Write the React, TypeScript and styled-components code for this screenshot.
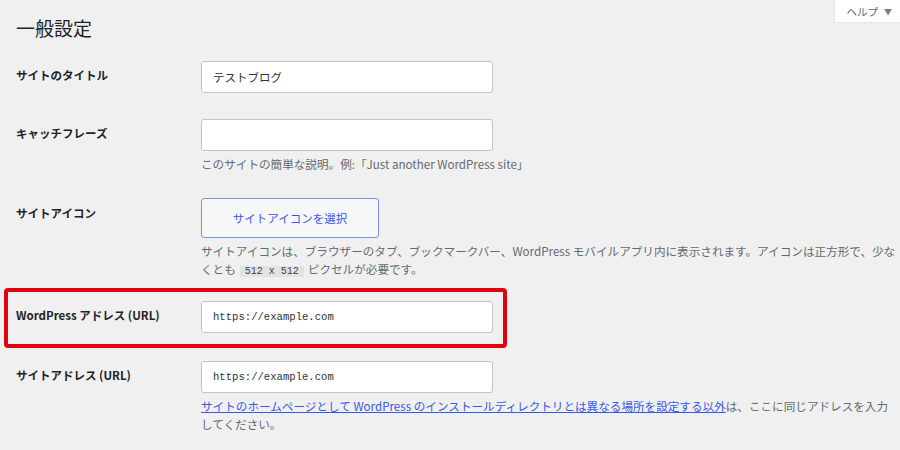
import * as React from 'react';
import styled, { createGlobalStyle } from 'styled-components';

const GlobalStyle = createGlobalStyle`
  html, body {
    margin: 0;
    padding: 0;
    background: #f0f0f1;
  }
  body {
    font-family: "Noto Sans CJK JP", "Liberation Sans", sans-serif;
    color: #1d2327;
  }
`;

const Page = styled.div`
  width: 900px;
  height: 450px;
  overflow: hidden;
  padding-left: 16px;
  box-sizing: border-box;
`;

const Header = styled.div`
  display: flex;
  justify-content: space-between;
  align-items: flex-start;
  height: 48px;
`;

const Title = styled.h1`
  margin: 0;
  padding-top: 15px;
  font-size: 19px;
  line-height: 26px;
  font-weight: 400;
  color: #1d2327;
`;

const HelpTab = styled.button`
  display: flex;
  align-items: center;
  gap: 6px;
  height: 22px;
  padding: 0 8px 0 12px;
  border: none;
  background: #fff;
  box-shadow: 0 0 0 1px rgba(0, 0, 0, 0.04);
  font-family: inherit;
  font-size: 10.5px;
  color: #646970;
  cursor: pointer;
  span {
    font-size: 8px;
    color: #787c82;
  }
`;

const FormTable = styled.div`
  display: flex;
  flex-direction: column;
`;

const Row = styled.div<{ $flat?: boolean }>`
  display: flex;
  align-items: flex-start;
  padding: ${(p) => (p.$flat ? '0' : '13px 0')};
`;

const Highlight = styled.div`
  align-self: flex-start;
  margin: -5px 0 0 -12px;
  padding: 9px 10px 11px 8px;
  border: 4px solid #e3000f;
  border-radius: 4px;
`;

const Label = styled.label`
  flex: 0 0 185px;
  padding-top: 5px;
  font-size: 11.5px;
  line-height: 18px;
  font-weight: 700;
  color: #1d2327;
`;

const Field = styled.div`
  flex: 1;
  min-width: 0;
`;

const TextInput = styled.input<{ $mono?: boolean }>`
  display: block;
  box-sizing: border-box;
  width: 292px;
  height: 32px;
  margin: 0;
  padding: 0 11px;
  border: 1px solid #c3c4c7;
  border-radius: 3px;
  background: #fff;
  color: #2c3338;
  font-family: ${(p) =>
    p.$mono
      ? '"Liberation Mono", "DejaVu Sans Mono", monospace'
      : '"Noto Sans CJK JP", sans-serif'};
  font-size: ${(p) => (p.$mono ? '10.6px' : '11.5px')};
  outline: none;
`;

const Description = styled.p`
  margin: 4px 0 0;
  font-size: 11.6px;
  line-height: 18px;
  color: #646970;
  a {
    color: #3858e9;
    text-decoration: underline;
  }
`;

const Code = styled.code`
  margin: 0 4px;
  padding: 0 5px;
  background: #e3e3e4;
  color: #3c434a;
  font-family: "Liberation Mono", "DejaVu Sans Mono", monospace;
  font-size: 10px;
  line-height: 16px;
`;

const IconButton = styled.button`
  display: block;
  width: 178px;
  height: 40px;
  margin-top: -1px;
  padding: 0;
  border: 1px solid #7d8fe8;
  border-radius: 3px;
  background: #f6f7f7;
  color: #3858e9;
  font-family: inherit;
  font-size: 11.5px;
  cursor: pointer;
`;

const App: React.FC = () => {
  return (
    <>
      <GlobalStyle />
      <Page>
        <Header>
          <Title>一般設定</Title>
          <HelpTab>
            ヘルプ <span>▼</span>
          </HelpTab>
        </Header>
        <FormTable>
          <Row>
            <Label>サイトのタイトル</Label>
            <Field>
              <TextInput defaultValue="テストブログ" />
            </Field>
          </Row>
          <Row>
            <Label>キャッチフレーズ</Label>
            <Field>
              <TextInput defaultValue="" />
              <Description>このサイトの簡単な説明。例:「Just another WordPress site」</Description>
            </Field>
          </Row>
          <Row>
            <Label>サイトアイコン</Label>
            <Field>
              <IconButton>サイトアイコンを選択</IconButton>
              <Description>
                サイトアイコンは、ブラウザーのタブ、ブックマークバー、WordPress モバイルアプリ内に表示されます。アイコンは正方形で、少なくとも
                <Code>512 x 512</Code>
                ピクセルが必要です。
              </Description>
            </Field>
          </Row>
          <Highlight>
            <Row $flat>
              <Label>WordPress アドレス (URL)</Label>
              <Field>
                <TextInput $mono defaultValue="https://example.com" />
              </Field>
            </Row>
          </Highlight>
          <Row>
            <Label>サイトアドレス (URL)</Label>
            <Field>
              <TextInput $mono defaultValue="https://example.com" />
              <Description>
                <a href="#">サイトのホームページとして WordPress のインストールディレクトリとは異なる場所を設定する以外</a>
                は、ここに同じアドレスを入力
                <br />
                してください。
              </Description>
            </Field>
          </Row>
        </FormTable>
      </Page>
    </>
  );
};

export default App;
